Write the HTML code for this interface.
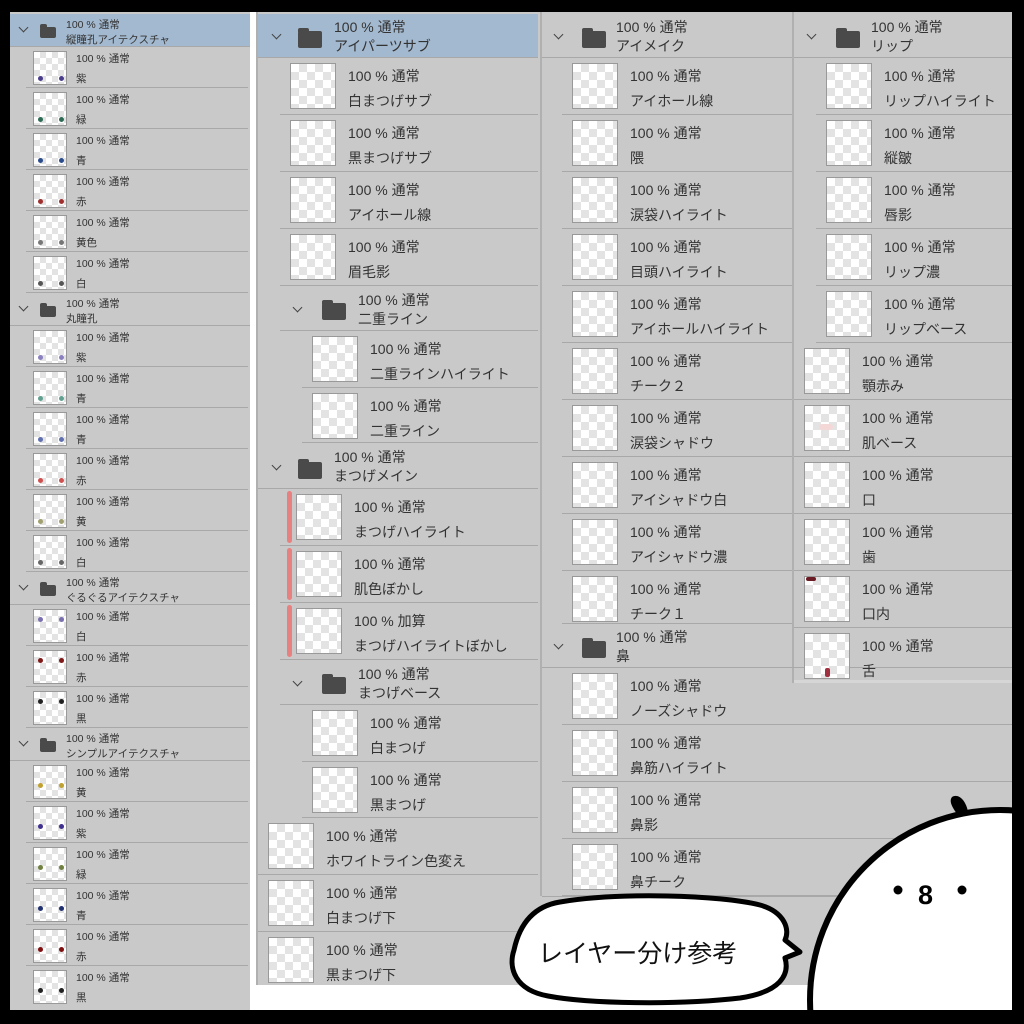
<!DOCTYPE html>
<html><head><meta charset="utf-8"><style>
*{margin:0;padding:0;box-sizing:border-box}
html{overflow:hidden}
body{width:1024px;height:1024px;background:#000;position:relative;overflow:hidden;font-family:"Liberation Sans","Noto Sans CJK JP",sans-serif;color:#333}
.p{position:absolute;background:#c9c9c9}
.r{position:absolute;border-bottom:1px solid #a8a8a8}
.t{position:absolute;border:1px solid #999;background-color:#fff;background-image:conic-gradient(#e3e3e3 25%,#fff 0 50%,#e3e3e3 0 75%,#fff 0);}
.s .t{background-size:12px 12px}
.l .t{background-size:16px 16px}
.x{position:absolute;white-space:nowrap}
.s .r{height:41px;left:16px;width:222px}
.s .t{left:7px;top:4px;width:34px;height:34px}
.s .x{left:50px;font-size:10.5px}
.s .a{top:4px}.s .b{top:24px}
.l .r{height:57px}
.l .t{top:5px;width:46px;height:46px}
.l .x{font-size:14px}
.l .a{top:8px}.l .b{top:33px}
.f{position:absolute;border-bottom:1px solid #a8a8a8}
.hl{background:#a3b9cf}
.cv{position:absolute;width:7px;height:7px;border-right:1.5px solid #444;border-bottom:1.5px solid #444;transform:rotate(45deg)}
.fd{position:absolute;background:#4a4a4a;border-radius:2px}
.fd:before{content:"";position:absolute;left:0;top:-3px;width:45%;height:4px;background:#4a4a4a;border-radius:2px 2px 0 0}
.rb{position:absolute;left:-11px;top:2px;width:5px;height:52px;background:#e88080;border-radius:3px}
.dot{position:absolute;width:5px;height:5px;border-radius:50%}
</style></head><body>
<div style="position:absolute;left:10px;top:12px;width:1002px;height:998px;background:#fff"></div>

<!-- column 1 -->
<div class="p s" style="left:10px;top:12px;width:240px;height:998px;overflow:hidden">
<div class="f hl" style="left:0;top:2px;width:240px;height:33px"><i class="cv" style="left:10px;top:10px"></i><i class="fd" style="left:30px;top:13px;width:16px;height:11px"></i><span class="x" style="left:56px;top:3px;font-size:10.5px">100 % 通常</span><span class="x" style="left:56px;top:18px;font-size:10.5px">縦瞳孔アイテクスチャ</span></div>
<div class="r" style="top:35px"><i class="t"><i class="dot" style="left:4px;bottom:3px;background:#4a3c8c"></i><i class="dot" style="left:25px;bottom:3px;background:#4a3c8c"></i></i><span class="x a">100 % 通常</span><span class="x b">紫</span></div>
<div class="r" style="top:76px"><i class="t"><i class="dot" style="left:4px;bottom:3px;background:#2d6b55"></i><i class="dot" style="left:25px;bottom:3px;background:#2d6b55"></i></i><span class="x a">100 % 通常</span><span class="x b">緑</span></div>
<div class="r" style="top:117px"><i class="t"><i class="dot" style="left:4px;bottom:3px;background:#2b4c8c"></i><i class="dot" style="left:25px;bottom:3px;background:#2b4c8c"></i></i><span class="x a">100 % 通常</span><span class="x b">青</span></div>
<div class="r" style="top:158px"><i class="t"><i class="dot" style="left:4px;bottom:3px;background:#a03030"></i><i class="dot" style="left:25px;bottom:3px;background:#a03030"></i></i><span class="x a">100 % 通常</span><span class="x b">赤</span></div>
<div class="r" style="top:199px"><i class="t"><i class="dot" style="left:4px;bottom:3px;background:#777"></i><i class="dot" style="left:25px;bottom:3px;background:#777"></i></i><span class="x a">100 % 通常</span><span class="x b">黄色</span></div>
<div class="r" style="top:240px"><i class="t"><i class="dot" style="left:4px;bottom:3px;background:#555"></i><i class="dot" style="left:25px;bottom:3px;background:#555"></i></i><span class="x a">100 % 通常</span><span class="x b">白</span></div>
<div class="f" style="left:0;top:281px;width:240px;height:33px"><i class="cv" style="left:10px;top:10px"></i><i class="fd" style="left:30px;top:13px;width:16px;height:11px"></i><span class="x" style="left:56px;top:3px;font-size:10.5px">100 % 通常</span><span class="x" style="left:56px;top:18px;font-size:10.5px">丸瞳孔</span></div>
<div class="r" style="top:314px"><i class="t"><i class="dot" style="left:4px;bottom:3px;background:#8a80c0"></i><i class="dot" style="left:25px;bottom:3px;background:#8a80c0"></i></i><span class="x a">100 % 通常</span><span class="x b">紫</span></div>
<div class="r" style="top:355px"><i class="t"><i class="dot" style="left:4px;bottom:3px;background:#60a090"></i><i class="dot" style="left:25px;bottom:3px;background:#60a090"></i></i><span class="x a">100 % 通常</span><span class="x b">青</span></div>
<div class="r" style="top:396px"><i class="t"><i class="dot" style="left:4px;bottom:3px;background:#6070b0"></i><i class="dot" style="left:25px;bottom:3px;background:#6070b0"></i></i><span class="x a">100 % 通常</span><span class="x b">青</span></div>
<div class="r" style="top:437px"><i class="t"><i class="dot" style="left:4px;bottom:3px;background:#d05050"></i><i class="dot" style="left:25px;bottom:3px;background:#d05050"></i></i><span class="x a">100 % 通常</span><span class="x b">赤</span></div>
<div class="r" style="top:478px"><i class="t"><i class="dot" style="left:4px;bottom:3px;background:#a0a070"></i><i class="dot" style="left:25px;bottom:3px;background:#a0a070"></i></i><span class="x a">100 % 通常</span><span class="x b">黄</span></div>
<div class="r" style="top:519px"><i class="t"><i class="dot" style="left:4px;bottom:3px;background:#666"></i><i class="dot" style="left:25px;bottom:3px;background:#666"></i></i><span class="x a">100 % 通常</span><span class="x b">白</span></div>
<div class="f" style="left:0;top:560px;width:240px;height:33px"><i class="cv" style="left:10px;top:10px"></i><i class="fd" style="left:30px;top:13px;width:16px;height:11px"></i><span class="x" style="left:56px;top:3px;font-size:10.5px">100 % 通常</span><span class="x" style="left:56px;top:18px;font-size:10.5px">ぐるぐるアイテクスチャ</span></div>
<div class="r" style="top:593px"><i class="t"><i class="dot" style="left:4px;top:7px;background:#7a70b0"></i><i class="dot" style="left:25px;top:7px;background:#7a70b0"></i></i><span class="x a">100 % 通常</span><span class="x b">白</span></div>
<div class="r" style="top:634px"><i class="t"><i class="dot" style="left:4px;top:7px;background:#801818"></i><i class="dot" style="left:25px;top:7px;background:#801818"></i></i><span class="x a">100 % 通常</span><span class="x b">赤</span></div>
<div class="r" style="top:675px"><i class="t"><i class="dot" style="left:4px;top:7px;background:#222"></i><i class="dot" style="left:25px;top:7px;background:#222"></i></i><span class="x a">100 % 通常</span><span class="x b">黒</span></div>
<div class="f" style="left:0;top:716px;width:240px;height:33px"><i class="cv" style="left:10px;top:10px"></i><i class="fd" style="left:30px;top:13px;width:16px;height:11px"></i><span class="x" style="left:56px;top:3px;font-size:10.5px">100 % 通常</span><span class="x" style="left:56px;top:18px;font-size:10.5px">シンプルアイテクスチャ</span></div>
<div class="r" style="top:749px"><i class="t"><i class="dot" style="left:4px;top:17px;background:#c0a030"></i><i class="dot" style="left:25px;top:17px;background:#c0a030"></i></i><span class="x a">100 % 通常</span><span class="x b">黄</span></div>
<div class="r" style="top:790px"><i class="t"><i class="dot" style="left:4px;top:17px;background:#403090"></i><i class="dot" style="left:25px;top:17px;background:#403090"></i></i><span class="x a">100 % 通常</span><span class="x b">紫</span></div>
<div class="r" style="top:831px"><i class="t"><i class="dot" style="left:4px;top:17px;background:#708040"></i><i class="dot" style="left:25px;top:17px;background:#708040"></i></i><span class="x a">100 % 通常</span><span class="x b">緑</span></div>
<div class="r" style="top:872px"><i class="t"><i class="dot" style="left:4px;top:17px;background:#203070"></i><i class="dot" style="left:25px;top:17px;background:#203070"></i></i><span class="x a">100 % 通常</span><span class="x b">青</span></div>
<div class="r" style="top:913px"><i class="t"><i class="dot" style="left:4px;top:17px;background:#801010"></i><i class="dot" style="left:25px;top:17px;background:#801010"></i></i><span class="x a">100 % 通常</span><span class="x b">赤</span></div>
<div class="r" style="top:954px;border-bottom:none"><i class="t"><i class="dot" style="left:4px;top:17px;background:#222"></i><i class="dot" style="left:25px;top:17px;background:#222"></i></i><span class="x a">100 % 通常</span><span class="x b">黒</span></div>
</div>

<div class="p l" style="left:256px;top:12px;width:756px;height:973px;border-left:2px solid #b0b0b0;overflow:hidden">
<div style="position:absolute;left:282px;top:0;width:2px;height:884px;background:#b0b0b0"></div>
<div style="position:absolute;left:534px;top:0;width:2px;height:671px;background:#b0b0b0"></div>
<div class="f hl" style="left:0;top:2px;width:280px;height:44px"><i class="cv" style="left:15px;top:17px"></i><i class="fd" style="left:40px;top:17px;width:24px;height:17px"></i><span class="x" style="left:76px;top:3px;font-size:14px">100 % 通常</span><span class="x" style="left:76px;top:22px;font-size:14px">アイパーツサブ</span></div>
<div class="r" style="left:22px;width:258px;top:46px"><i class="t" style="left:10px"></i><span class="x a" style="left:68px">100 % 通常</span><span class="x b" style="left:68px">白まつげサブ</span></div>
<div class="r" style="left:22px;width:258px;top:103px"><i class="t" style="left:10px"></i><span class="x a" style="left:68px">100 % 通常</span><span class="x b" style="left:68px">黒まつげサブ</span></div>
<div class="r" style="left:22px;width:258px;top:160px"><i class="t" style="left:10px"></i><span class="x a" style="left:68px">100 % 通常</span><span class="x b" style="left:68px">アイホール線</span></div>
<div class="r" style="left:22px;width:258px;top:217px"><i class="t" style="left:10px"></i><span class="x a" style="left:68px">100 % 通常</span><span class="x b" style="left:68px">眉毛影</span></div>
<div class="f" style="left:22px;width:258px;top:274px;height:45px"><i class="cv" style="left:14px;top:18px"></i><i class="fd" style="left:42px;top:17px;width:24px;height:17px"></i><span class="x" style="left:78px;top:4px;font-size:14px">100 % 通常</span><span class="x" style="left:78px;top:23px;font-size:14px">二重ライン</span></div>
<div class="r" style="left:44px;width:236px;top:319px"><i class="t" style="left:10px"></i><span class="x a" style="left:68px">100 % 通常</span><span class="x b" style="left:68px">二重ラインハイライト</span></div>
<div class="r" style="left:44px;width:236px;top:376px;height:55px"><i class="t" style="left:10px"></i><span class="x a" style="left:68px">100 % 通常</span><span class="x b" style="left:68px">二重ライン</span></div>
<div class="f" style="left:0;width:280px;top:431px;height:46px"><i class="cv" style="left:15px;top:19px"></i><i class="fd" style="left:40px;top:19px;width:24px;height:17px"></i><span class="x" style="left:76px;top:4px;font-size:14px">100 % 通常</span><span class="x" style="left:76px;top:23px;font-size:14px">まつげメイン</span></div>
<div class="r" style="left:22px;width:258px;top:477px"><i class="rb" style="left:7px"></i><i class="t" style="left:16px"></i><span class="x a" style="left:74px">100 % 通常</span><span class="x b" style="left:74px">まつげハイライト</span></div>
<div class="r" style="left:22px;width:258px;top:534px"><i class="rb" style="left:7px"></i><i class="t" style="left:16px"></i><span class="x a" style="left:74px">100 % 通常</span><span class="x b" style="left:74px">肌色ぼかし</span></div>
<div class="r" style="left:22px;width:258px;top:591px"><i class="rb" style="left:7px"></i><i class="t" style="left:16px"></i><span class="x a" style="left:74px">100 % 加算</span><span class="x b" style="left:74px">まつげハイライトぼかし</span></div>
<div class="f" style="left:22px;width:258px;top:648px;height:45px"><i class="cv" style="left:14px;top:18px"></i><i class="fd" style="left:42px;top:17px;width:24px;height:17px"></i><span class="x" style="left:78px;top:4px;font-size:14px">100 % 通常</span><span class="x" style="left:78px;top:23px;font-size:14px">まつげベース</span></div>
<div class="r" style="left:44px;width:236px;top:693px"><i class="t" style="left:10px"></i><span class="x a" style="left:68px">100 % 通常</span><span class="x b" style="left:68px">白まつげ</span></div>
<div class="r" style="left:44px;width:236px;top:750px;height:56px"><i class="t" style="left:10px"></i><span class="x a" style="left:68px">100 % 通常</span><span class="x b" style="left:68px">黒まつげ</span></div>
<div class="r" style="left:0;width:280px;top:806px"><i class="t" style="left:10px"></i><span class="x a" style="left:68px">100 % 通常</span><span class="x b" style="left:68px">ホワイトライン色変え</span></div>
<div class="r" style="left:0;width:280px;top:863px"><i class="t" style="left:10px"></i><span class="x a" style="left:68px">100 % 通常</span><span class="x b" style="left:68px">白まつげ下</span></div>
<div class="r" style="left:0;width:280px;top:920px;height:53px;border-bottom:none"><i class="t" style="left:10px"></i><span class="x a" style="left:68px">100 % 通常</span><span class="x b" style="left:68px">黒まつげ下</span></div>
<div class="f" style="left:284px;width:250px;top:2px;height:44px"><i class="cv" style="left:13px;top:17px"></i><i class="fd" style="left:40px;top:17px;width:24px;height:17px"></i><span class="x" style="left:74px;top:3px;font-size:14px">100 % 通常</span><span class="x" style="left:74px;top:22px;font-size:14px">アイメイク</span></div>
<div class="r" style="left:304px;width:230px;top:46px"><i class="t" style="left:10px"></i><span class="x a" style="left:68px">100 % 通常</span><span class="x b" style="left:68px">アイホール線</span></div>
<div class="r" style="left:304px;width:230px;top:103px"><i class="t" style="left:10px"></i><span class="x a" style="left:68px">100 % 通常</span><span class="x b" style="left:68px">隈</span></div>
<div class="r" style="left:304px;width:230px;top:160px"><i class="t" style="left:10px"></i><span class="x a" style="left:68px">100 % 通常</span><span class="x b" style="left:68px">涙袋ハイライト</span></div>
<div class="r" style="left:304px;width:230px;top:217px"><i class="t" style="left:10px"></i><span class="x a" style="left:68px">100 % 通常</span><span class="x b" style="left:68px">目頭ハイライト</span></div>
<div class="r" style="left:304px;width:230px;top:274px"><i class="t" style="left:10px"></i><span class="x a" style="left:68px">100 % 通常</span><span class="x b" style="left:68px">アイホールハイライト</span></div>
<div class="r" style="left:304px;width:230px;top:331px"><i class="t" style="left:10px"></i><span class="x a" style="left:68px">100 % 通常</span><span class="x b" style="left:68px">チーク２</span></div>
<div class="r" style="left:304px;width:230px;top:388px"><i class="t" style="left:10px"></i><span class="x a" style="left:68px">100 % 通常</span><span class="x b" style="left:68px">涙袋シャドウ</span></div>
<div class="r" style="left:304px;width:230px;top:445px"><i class="t" style="left:10px"></i><span class="x a" style="left:68px">100 % 通常</span><span class="x b" style="left:68px">アイシャドウ白</span></div>
<div class="r" style="left:304px;width:230px;top:502px"><i class="t" style="left:10px"></i><span class="x a" style="left:68px">100 % 通常</span><span class="x b" style="left:68px">アイシャドウ濃</span></div>
<div class="r" style="left:304px;width:230px;top:559px;height:53px"><i class="t" style="left:10px"></i><span class="x a" style="left:68px">100 % 通常</span><span class="x b" style="left:68px">チーク１</span></div>
<div class="f" style="left:284px;width:472px;top:612px;height:44px"><i class="cv" style="left:13px;top:17px"></i><i class="fd" style="left:40px;top:17px;width:24px;height:17px"></i><span class="x" style="left:74px;top:3px;font-size:14px">100 % 通常</span><span class="x" style="left:74px;top:22px;font-size:14px">鼻</span></div>
<div class="r" style="left:304px;width:452px;top:656px"><i class="t" style="left:10px"></i><span class="x a" style="left:68px">100 % 通常</span><span class="x b" style="left:68px">ノーズシャドウ</span></div>
<div class="r" style="left:304px;width:452px;top:713px"><i class="t" style="left:10px"></i><span class="x a" style="left:68px">100 % 通常</span><span class="x b" style="left:68px">鼻筋ハイライト</span></div>
<div class="r" style="left:304px;width:452px;top:770px"><i class="t" style="left:10px"></i><span class="x a" style="left:68px">100 % 通常</span><span class="x b" style="left:68px">鼻影</span></div>
<div class="r" style="left:304px;width:452px;top:827px"><i class="t" style="left:10px"></i><span class="x a" style="left:68px">100 % 通常</span><span class="x b" style="left:68px">鼻チーク</span></div>
<div style="position:absolute;left:284px;top:884px;width:472px;border-top:1px solid #a8a8a8"></div>
<div class="f" style="left:536px;width:220px;top:2px;height:44px"><i class="cv" style="left:14px;top:17px"></i><i class="fd" style="left:42px;top:17px;width:24px;height:17px"></i><span class="x" style="left:77px;top:3px;font-size:14px">100 % 通常</span><span class="x" style="left:77px;top:22px;font-size:14px">リップ</span></div>
<div class="r" style="left:558px;width:198px;top:46px"><i class="t" style="left:10px"></i><span class="x a" style="left:68px">100 % 通常</span><span class="x b" style="left:68px">リップハイライト</span></div>
<div class="r" style="left:558px;width:198px;top:103px"><i class="t" style="left:10px"></i><span class="x a" style="left:68px">100 % 通常</span><span class="x b" style="left:68px">縦皺</span></div>
<div class="r" style="left:558px;width:198px;top:160px"><i class="t" style="left:10px"></i><span class="x a" style="left:68px">100 % 通常</span><span class="x b" style="left:68px">唇影</span></div>
<div class="r" style="left:558px;width:198px;top:217px"><i class="t" style="left:10px"></i><span class="x a" style="left:68px">100 % 通常</span><span class="x b" style="left:68px">リップ濃</span></div>
<div class="r" style="left:558px;width:198px;top:274px"><i class="t" style="left:10px"></i><span class="x a" style="left:68px">100 % 通常</span><span class="x b" style="left:68px">リップベース</span></div>
<div class="r" style="left:536px;width:220px;top:331px"><i class="t" style="left:10px"></i><span class="x a" style="left:68px">100 % 通常</span><span class="x b" style="left:68px">顎赤み</span></div>
<div class="r" style="left:536px;width:220px;top:388px"><i class="t" style="left:10px"><i style="position:absolute;left:14px;top:18px;width:14px;height:6px;background:#f4d8d8;border-radius:3px"></i></i><span class="x a" style="left:68px">100 % 通常</span><span class="x b" style="left:68px">肌ベース</span></div>
<div class="r" style="left:536px;width:220px;top:445px"><i class="t" style="left:10px"></i><span class="x a" style="left:68px">100 % 通常</span><span class="x b" style="left:68px">口</span></div>
<div class="r" style="left:536px;width:220px;top:502px"><i class="t" style="left:10px"></i><span class="x a" style="left:68px">100 % 通常</span><span class="x b" style="left:68px">歯</span></div>
<div class="r" style="left:536px;width:220px;top:559px"><i class="t" style="left:10px"><i style="position:absolute;left:1px;top:0;width:10px;height:4px;background:#6a1a22;border-radius:2px"></i></i><span class="x a" style="left:68px">100 % 通常</span><span class="x b" style="left:68px">口内</span></div>
<div class="r" style="left:536px;width:220px;top:616px;height:55px;border-bottom:3px solid #d6d6d6"><i class="t" style="left:10px"><i style="position:absolute;left:20px;top:34px;width:5px;height:9px;background:#a03040;border-radius:2px"></i></i><span class="x a" style="left:68px">100 % 通常</span><span class="x b" style="left:68px">舌</span></div>
</div>

<svg style="position:absolute;left:0;top:0" width="1024" height="1024">
<path d="M560 902 C620 892 720 895 760 905 C785 912 790 930 785 940 L800 952 L785 958 C790 975 780 992 740 998 C680 1005 590 1004 548 996 C515 990 508 968 514 950 C520 922 535 906 560 902 Z" fill="#fff" stroke="#000" stroke-width="5" stroke-linejoin="round"/>
<text x="538" y="962" font-family="Liberation Sans, Noto Sans CJK JP, sans-serif" font-size="25" fill="#111">レイヤー分け参考</text>
<path d="M952 797 C958 793 966 800 968 812 L960 818 C954 810 948 802 952 797Z" fill="#000"/>
<circle cx="1000" cy="1000" r="190" fill="#fff" stroke="#000" stroke-width="6"/>
<circle cx="898" cy="890" r="4.5" fill="#000"/>
<circle cx="962" cy="890" r="4.5" fill="#000"/>
<text x="918" y="904" font-family="Liberation Sans, sans-serif" font-weight="bold" font-size="27" fill="#000">8</text>
<rect x="1012" y="0" width="12" height="1024" fill="#000"/>
<rect x="0" y="1010" width="1024" height="14" fill="#000"/>
</svg>
</body></html>
